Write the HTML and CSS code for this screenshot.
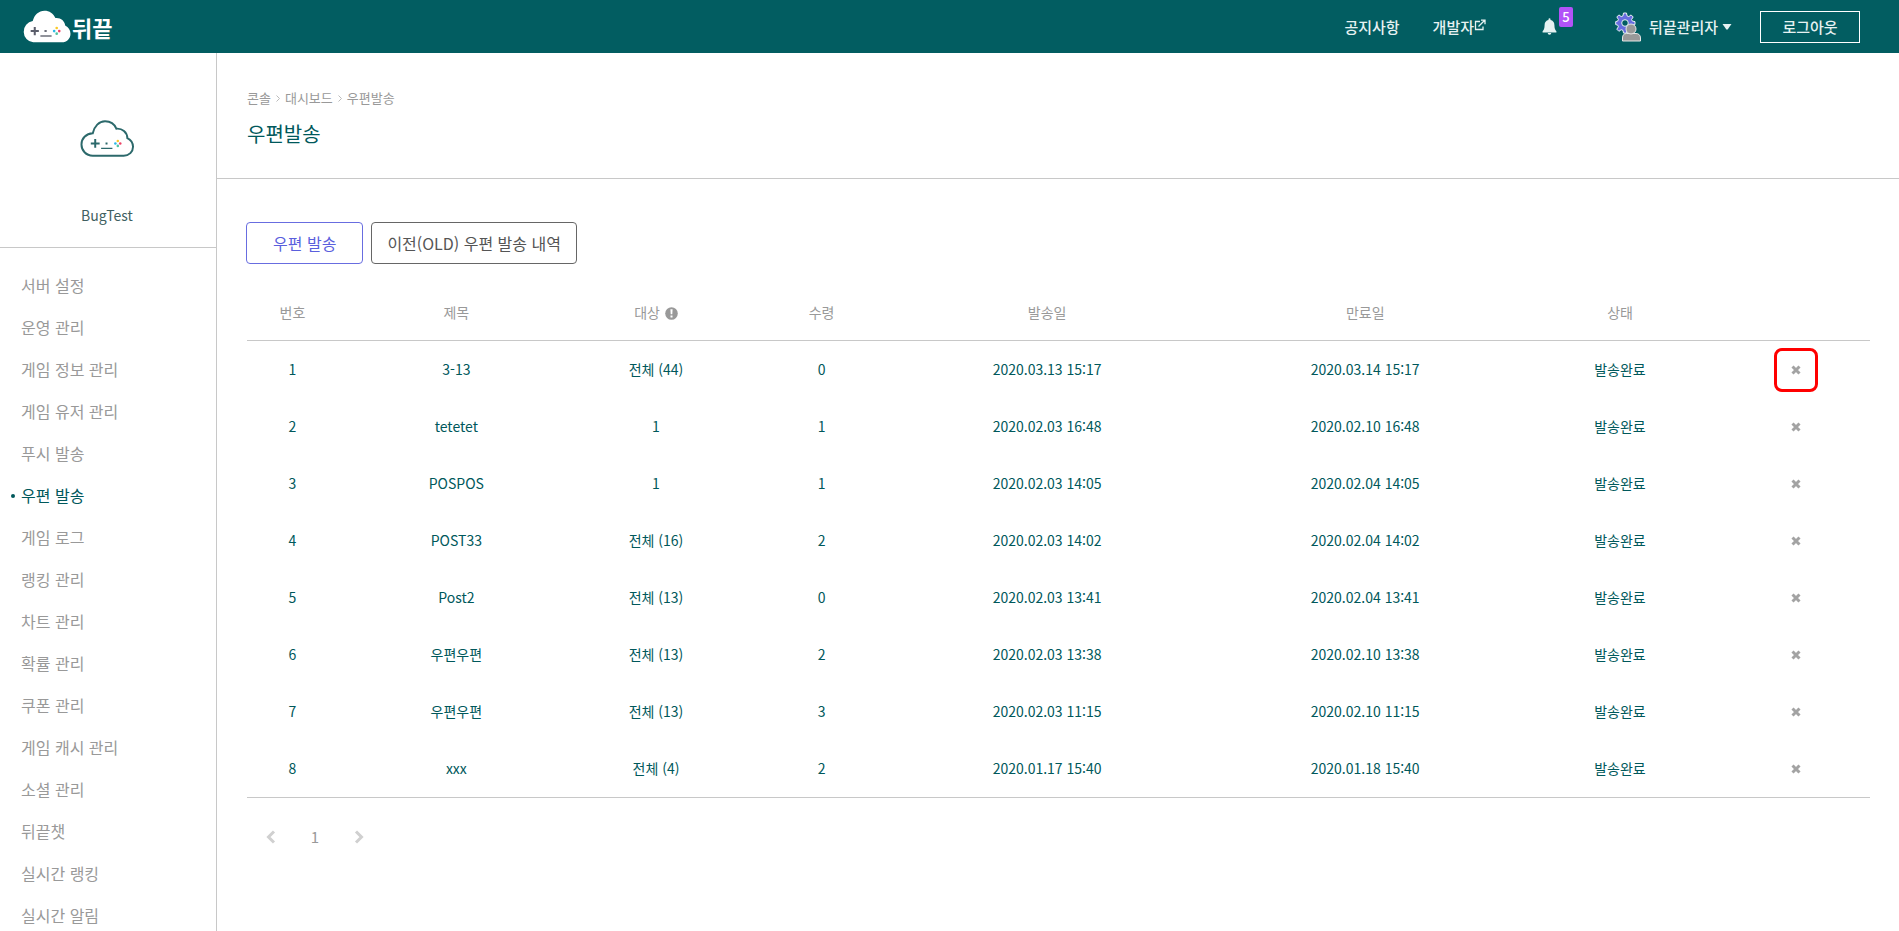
FILE: index.html
```html
<!DOCTYPE html>
<html lang="ko">
<head>
    <meta charset="UTF-8">
    <meta name="viewport" content="width=device-width, initial-scale=1.0">
    <title>우편발송</title>
    <link rel="stylesheet" href="styles.css">
</head>
<body>
    <!-- 공통 아이콘 -->
    <svg class="symbols" aria-hidden="true">
        <symbol id="icon-x" viewBox="0 0 10 10">
            <path d="M1.500 1.500l7 7M8.500 1.500l-7 7" stroke="currentColor" stroke-width="3"/>
        </symbol>
    </svg>

    <header class="header">
        <a class="logo" href="#">
            <svg width="49" height="33" viewBox="1 1 48 32" aria-hidden="true">
                <path d="M12 32.500a10.500 10.500 0 0 1-.5-20.800C13 5.500 17.500 1.500 23 1.500c4.800 0 8.800 2.600 10.700 7.200 5-.6 9 2.600 9.600 7.200 3.300 1.600 5.200 4.700 5.200 8.100 0 4.700-3.600 8.500-8.500 8.500z" fill="#fff"/>
                <path d="M9.500 21.500h8M13.500 17.500v8" stroke="#5b5e6b" stroke-width="2"/>
                <path d="M23 20.500h2.200v2H23zM19 25.500h11v1.500H19z" fill="#6d707b"/>
                <circle cx="35" cy="18.500" r="1.300" fill="#fbc926"/>
                <circle cx="32.500" cy="21.500" r="1.300" fill="#2bb7e5"/>
                <circle cx="37.500" cy="21.500" r="1.300" fill="#ee4266"/>
                <circle cx="35" cy="24" r="1.300" fill="#4fc3a1"/>
            </svg>
            <span>뒤끝</span>
        </a>
        <nav class="top-nav">
            <a class="notice" href="#">공지사항</a>
            <a class="developer" href="#">개발자<svg width="12" height="12" viewBox="0 0 12 12" fill="none" stroke="currentColor" stroke-width="1.300" aria-hidden="true"><path d="M6 2.500H1.500v8h7.500V7.500M4.500 7.500L10.500 1.500M7 1.200h4v4"/></svg></a>
            <button class="bell" type="button" aria-label="알림 5">
                <svg width="15" height="17" viewBox="0 0 14 17" fill="currentColor" aria-hidden="true"><path d="M6 1.200a1 1 0 0 1 2 0v.9c2.400.5 3.900 2.300 3.900 4.900 0 3.600.8 5.200 2 6.200v1.300H.1v-1.300c1.200-1 2-2.600 2-6.200 0-2.600 1.500-4.400 3.900-4.900zM5.200 15h3.600a1.800 1.800 0 0 1-3.600 0z"/></svg>
                <span class="badge">5</span>
            </button>
            <button class="account" type="button">
                <svg width="26" height="30" viewBox="0 0 26 30" aria-hidden="true">
                    <g fill="#686de0" stroke="#e6f2f2" stroke-width="1">
                        <path d="M8.500 1h3l.5 2.800 1.800.8 2.300-1.700 2.100 2.100-1.600 2.400.7 1.700 2.700.5v3l-2.700.5-.7 1.700 1.600 2.400-2.100 2.100-2.300-1.600-1.800.7-.5 2.700h-3L8 18.400l-1.800-.7-2.300 1.600-2.100-2.100 1.600-2.400-.7-1.700L.7 12.600v-3l2-.5.7-1.700L1.800 5l2.100-2.100 2.300 1.700L8 3.800z"/>
                        <circle cx="10" cy="11" r="3.300" fill="#025d61"/>
                    </g>
                    <g fill="#999" stroke="#e6e6e6" stroke-width="1">
                        <path d="M7.500 29v-3c0-3 1.500-4.500 4-4.500h9.500c2.500 0 4.500 1.500 4.500 4.500v3z"/>
                        <circle cx="16" cy="17" r="5"/>
                    </g>
                </svg>
                <span>뒤끝관리자</span>
                <svg width="10" height="6" viewBox="0 0 10 6" fill="currentColor" aria-hidden="true"><path d="M.5 0h9L5.800 5.300q-.8.800-1.600 0z"/></svg>
            </button>
            <button class="logout" type="button">로그아웃</button>
        </nav>
    </header>

    <div class="layout">
        <aside class="sidebar">
            <div class="project">
                <svg width="55" height="40" viewBox="0 0 56 40" aria-hidden="true">
                    <path d="M13 37C6 37 1.500 31.500 1.500 25.500c0-6 4.500-11 11.500-11.300C14.500 7 19.500 2 25.500 2c5.500 0 9.500 2.700 11.500 7.500 6-.5 11 3.500 11.200 9.500 3.600 1.700 5.800 5 5.800 9 0 5-4 9-9.500 9z" fill="none" stroke="#2c696b" stroke-width="2"/>
                    <path d="M11 24.500h9M15.500 20v9" stroke="#2c696b" stroke-width="2"/>
                    <path d="M26 23.500h2v2h-2zM21.500 29h11.500v1.300H21.500z" fill="#2c696b"/>
                    <circle cx="38.500" cy="22" r="1.300" fill="#fbc926"/>
                    <circle cx="36" cy="24.500" r="1.300" fill="#2bb7e5"/>
                    <circle cx="41" cy="24.500" r="1.300" fill="#ee4266"/>
                    <circle cx="38.500" cy="27" r="1.300" fill="#4fc3a1"/>
                </svg>
                <p>BugTest</p>
            </div>
            <ul class="menu">
                <li><a href="#">서버 설정</a></li>
                <li><a href="#">운영 관리</a></li>
                <li><a href="#">게임 정보 관리</a></li>
                <li><a href="#">게임 유저 관리</a></li>
                <li><a href="#">푸시 발송</a></li>
                <li><a class="active" href="#">우편 발송</a></li>
                <li><a href="#">게임 로그</a></li>
                <li><a href="#">랭킹 관리</a></li>
                <li><a href="#">차트 관리</a></li>
                <li><a href="#">확률 관리</a></li>
                <li><a href="#">쿠폰 관리</a></li>
                <li><a href="#">게임 캐시 관리</a></li>
                <li><a href="#">소셜 관리</a></li>
                <li><a href="#">뒤끝챗</a></li>
                <li><a href="#">실시간 랭킹</a></li>
                <li><a href="#">실시간 알림</a></li>
            </ul>
        </aside>

        <main class="content">
            <div class="page-head">
                <div class="breadcrumb">
                    <a href="#">콘솔</a>
                    <svg width="4" height="7" viewBox="0 0 4 7" aria-hidden="true"><path d="M.5.500l3 3-3 3"/></svg>
                    <a href="#">대시보드</a>
                    <svg width="4" height="7" viewBox="0 0 4 7" aria-hidden="true"><path d="M.5.500l3 3-3 3"/></svg>
                    <a href="#">우편발송</a>
                </div>
                <h1>우편발송</h1>
            </div>

            <div class="page-body">
                <div class="buttons">
                    <button class="btn btn-primary" type="button">우편 발송</button>
                    <button class="btn" type="button">이전(OLD) 우편 발송 내역</button>
                </div>

                <table class="post-table">
                    <colgroup>
                        <col class="col-no">
                        <col class="col-title">
                        <col class="col-target">
                        <col class="col-receive">
                        <col class="col-sent">
                        <col class="col-expire">
                        <col class="col-state">
                        <col class="col-delete">
                    </colgroup>
                    <thead>
                        <tr>
                            <th>번호</th>
                            <th>제목</th>
                            <th>대상 <svg class="info" width="13" height="13" viewBox="0 0 13 13" aria-hidden="true"><circle cx="6.500" cy="6.500" r="6.300" fill="#999"/><path d="M5.400 2.300h2.200l-.3 5H5.700zM5.500 8.500h2v2h-2z" fill="#fff"/></svg></th>
                            <th>수령</th>
                            <th>발송일</th>
                            <th>만료일</th>
                            <th>상태</th>
                            <th></th>
                        </tr>
                    </thead>
                    <tbody>
                        <tr>
                            <td>1</td><td>3-13</td><td>전체 (44)</td><td>0</td>
                            <td>2020.03.13 15:17</td><td>2020.03.14 15:17</td><td>발송완료</td>
                            <td><button class="delete marked" type="button" aria-label="삭제"><svg width="10" height="10"><use href="#icon-x"/></svg></button></td>
                        </tr>
                        <tr>
                            <td>2</td><td>tetetet</td><td>1</td><td>1</td>
                            <td>2020.02.03 16:48</td><td>2020.02.10 16:48</td><td>발송완료</td>
                            <td><button class="delete" type="button" aria-label="삭제"><svg width="10" height="10"><use href="#icon-x"/></svg></button></td>
                        </tr>
                        <tr>
                            <td>3</td><td>POSPOS</td><td>1</td><td>1</td>
                            <td>2020.02.03 14:05</td><td>2020.02.04 14:05</td><td>발송완료</td>
                            <td><button class="delete" type="button" aria-label="삭제"><svg width="10" height="10"><use href="#icon-x"/></svg></button></td>
                        </tr>
                        <tr>
                            <td>4</td><td>POST33</td><td>전체 (16)</td><td>2</td>
                            <td>2020.02.03 14:02</td><td>2020.02.04 14:02</td><td>발송완료</td>
                            <td><button class="delete" type="button" aria-label="삭제"><svg width="10" height="10"><use href="#icon-x"/></svg></button></td>
                        </tr>
                        <tr>
                            <td>5</td><td>Post2</td><td>전체 (13)</td><td>0</td>
                            <td>2020.02.03 13:41</td><td>2020.02.04 13:41</td><td>발송완료</td>
                            <td><button class="delete" type="button" aria-label="삭제"><svg width="10" height="10"><use href="#icon-x"/></svg></button></td>
                        </tr>
                        <tr>
                            <td>6</td><td>우편우편</td><td>전체 (13)</td><td>2</td>
                            <td>2020.02.03 13:38</td><td>2020.02.10 13:38</td><td>발송완료</td>
                            <td><button class="delete" type="button" aria-label="삭제"><svg width="10" height="10"><use href="#icon-x"/></svg></button></td>
                        </tr>
                        <tr>
                            <td>7</td><td>우편우편</td><td>전체 (13)</td><td>3</td>
                            <td>2020.02.03 11:15</td><td>2020.02.10 11:15</td><td>발송완료</td>
                            <td><button class="delete" type="button" aria-label="삭제"><svg width="10" height="10"><use href="#icon-x"/></svg></button></td>
                        </tr>
                        <tr>
                            <td>8</td><td>xxx</td><td>전체 (4)</td><td>2</td>
                            <td>2020.01.17 15:40</td><td>2020.01.18 15:40</td><td>발송완료</td>
                            <td><button class="delete" type="button" aria-label="삭제"><svg width="10" height="10"><use href="#icon-x"/></svg></button></td>
                        </tr>
                    </tbody>
                </table>

                <div class="pagination">
                    <button type="button" aria-label="이전"><svg width="10" height="14" viewBox="0 0 10 14"><path d="M8 1.500L2.500 7 8 12.500"/></svg></button>
                    <button type="button">1</button>
                    <button type="button" aria-label="다음"><svg width="10" height="14" viewBox="0 0 10 14"><path d="M2 1.500L7.500 7 2 12.500"/></svg></button>
                </div>
            </div>
        </main>
    </div>
</body>
</html>
```

FILE: styles.css
```css
* {
    box-sizing: border-box;
}

body {
    margin: 0;
    font-family: "Noto Sans CJK KR", "Noto Sans", sans-serif;
    font-size: 14px;
    line-height: 20px;
    color: #00585b;
    background-color: #fff;
}

a {
    color: inherit;
    text-decoration: none;
}

button {
    font-family: inherit;
    font-size: 14px;
    line-height: 20px;
    color: inherit;
    background: none;
    border: none;
    padding: 0;
    cursor: pointer;
}

svg {
    flex: none;
}

.symbols {
    display: none;
}

/* Header */
.header {
    display: flex;
    justify-content: space-between;
    align-items: center;
    height: 53px;
    padding: 0 39px 0 22px;
    background-color: #025d61;
    color: #e6f2f2;
}

.logo {
    display: flex;
    align-items: center;
    gap: 1px;
    color: #fff;
    font-size: 22px;
    font-weight: bold;
}

.top-nav {
    display: flex;
    align-items: center;
    font-size: 15px;
    font-weight: 500;
}

.top-nav button {
    font-size: 15px;
    font-weight: 500;
}

.notice {
    margin-right: 33px;
}

.developer {
    display: flex;
    align-items: center;
    margin-right: 56px;
}

.developer svg {
    margin-bottom: 4px;
}

.bell {
    position: relative;
    display: flex;
    margin-right: 58px;
}

.badge {
    position: absolute;
    left: 17px;
    top: -11px;
    width: 14px;
    height: 20px;
    border-radius: 2px;
    background-color: #b253f8;
    color: #fff;
    font-size: 13px;
    text-align: center;
}

.account {
    display: flex;
    align-items: center;
    gap: 4px;
    margin-right: 28px;
}

.account span {
    margin-left: 4px;
}

.logout {
    width: 100px;
    height: 32px;
    border: 1px solid #fff;
}

/* Layout */
.layout {
    display: flex;
    min-height: calc(100vh - 53px);
}

.sidebar {
    flex: none;
    width: 217px;
    height: calc(100vh - 53px);
    overflow: hidden;
    border-right: 1px solid #c8c8c8;
}

.project {
    display: flex;
    flex-direction: column;
    align-items: center;
    height: 195px;
    padding: 66px 2px 0 0;
    border-bottom: 1px solid #c8c8c8;
    color: #3f5f61;
}

.project p {
    margin: 46px 0 0;
    font-size: 14px;
}

.menu {
    list-style: none;
    margin: 0;
    padding: 16px 0;
    color: #999;
    font-size: 16px;
    line-height: 42px;
}

.menu a {
    display: flex;
    align-items: center;
    padding-left: 21px;
}

.menu .active {
    padding-left: 11px;
    color: #00585b;
}

.menu .active::before {
    content: "";
    width: 4px;
    height: 4px;
    margin: 2px 6px 0 0;
    border-radius: 50%;
    background-color: #00585b;
}

.content {
    flex: 1;
    min-width: 0;
}

.page-head {
    height: 126px;
    padding: 35px 30px 0;
    border-bottom: 1px solid #c8c8c8;
}

.breadcrumb {
    display: flex;
    align-items: center;
    gap: 5px;
    font-size: 13px;
    color: #999;
}

.breadcrumb svg {
    fill: none;
    stroke: #bbb;
}

.page-head h1 {
    margin: 11px 0 0;
    font-size: 20px;
    font-weight: 400;
    line-height: 30px;
}

.page-body {
    padding: 43px 29px 40px 30px;
}

.buttons {
    display: flex;
    gap: 8px;
    margin-left: -1px;
}

.btn {
    height: 42px;
    padding: 0 15px;
    border: 1px solid #666;
    border-radius: 4px;
    color: #555;
    font-size: 16px;
}

.btn-primary {
    padding: 0 26px;
    border-color: #686de0;
    color: #5a5fdd;
}

/* Table */
.post-table {
    width: 100%;
    margin-top: 20px;
    table-layout: fixed;
    border-collapse: separate;
    border-spacing: 0;
    text-align: center;
    border-bottom: 1px solid #c8c8c8;
}

.col-no { width: 5.6%; }
.col-title { width: 14.6%; }
.col-target { width: 10%; }
.col-receive { width: 10.4%; }
.col-sent { width: 17.4%; }
.col-expire { width: 21.8%; }
.col-state { width: 9.6%; }
.col-delete { width: 10.6%; }

.post-table th {
    height: 57px;
    padding: 0;
    border-bottom: 1px solid #c8c8c8;
    color: #999;
    font-weight: 400;
}

.post-table td {
    height: 57px;
    padding: 0 0 1px;
}

.post-table td:last-child {
    padding: 0 0 0 24px;
}

.info {
    margin-left: 1px;
    vertical-align: -2px;
}

.delete {
    display: flex;
    align-items: center;
    justify-content: center;
    width: 44px;
    height: 44px;
    margin: 0 auto;
    color: #a3a3a3;
}

.delete.marked {
    border: 3px solid #f00;
    border-radius: 8px;
}

/* Pagination */
.pagination {
    display: flex;
    padding: 18px 2px;
}

.pagination button {
    display: flex;
    align-items: center;
    justify-content: center;
    width: 44px;
    height: 42px;
    color: #999;
    font-size: 15px;
}

.pagination path {
    fill: none;
    stroke: #d0d0d0;
    stroke-width: 3;
}
```
